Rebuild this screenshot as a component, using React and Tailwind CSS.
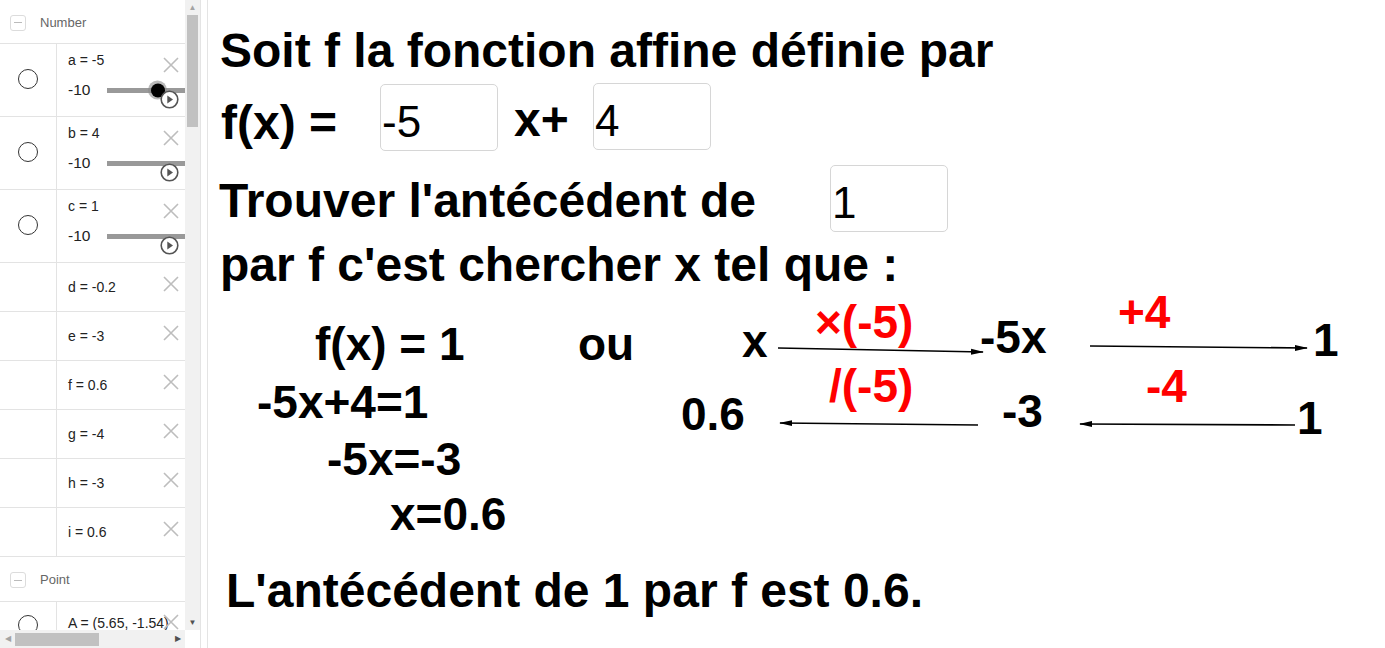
import React from "react";

const panelFont = "font-['Liberation_Sans',Arial,sans-serif]";
const T = "absolute whitespace-nowrap leading-none font-bold";

function Radio() {
  return <div className="h-[20px] w-[20px] rounded-full border border-[#333]" />;
}

function XIcon({ className }) {
  return (
    <svg className={className} width="18" height="18" viewBox="0 0 18 18">
      <path d="M2 2 L16 16 M16 2 L2 16" stroke="#bdbdbd" strokeWidth="1.6" fill="none" />
    </svg>
  );
}

function PlayButton() {
  return (
    <svg className="absolute left-[103px] top-[46px]" width="19" height="19" viewBox="0 0 19 19">
      <circle cx="9.5" cy="9.5" r="8.3" fill="#fff" stroke="#555" strokeWidth="1.6" />
      <path d="M7.3 5.6 L13 9.5 L7.3 13.4 Z" fill="#555" />
    </svg>
  );
}

function GroupHeader({ label, h }) {
  return (
    <div className={`flex items-center border-b border-[#e3e3e3] pl-[10px] pt-[2px] ${h}`}>
      <div className="flex h-[16px] w-[16px] items-center justify-center rounded-[3px] border border-[#dcdcdc]">
        <div className="h-px w-[8px] bg-[#bbb]" />
      </div>
      <span className="ml-[14px] text-[13px] text-[#666]">{label}</span>
    </div>
  );
}

function SliderRow({ label, knob }) {
  return (
    <div className="flex h-[73px] border-b border-[#e3e3e3]">
      <div className="flex w-[57px] shrink-0 justify-center border-r border-[#e3e3e3] pt-[25px]">
        <Radio />
      </div>
      <div className="relative flex-1 pl-[11px]">
        <div className="flex h-[32px] items-center text-[14px] text-[#222]">{label}</div>
        <div className="flex h-[28px] items-center">
          <span className="w-[39px] text-[15.5px] text-[#222]">-10</span>
          <div className="relative h-[5px] flex-1 bg-[#999]">
            {knob && (
              <div className="absolute left-[41px] top-1/2 flex h-[19px] w-[19px] -translate-y-1/2 items-center justify-center rounded-full bg-[#8a8a8a]/60">
                <div className="h-[14px] w-[14px] rounded-full bg-black" />
              </div>
            )}
          </div>
        </div>
        <XIcon className="absolute right-[5px] top-[12px]" />
        <PlayButton />
      </div>
    </div>
  );
}

function ValueRow({ label }) {
  return (
    <div className="flex h-[49px] border-b border-[#e3e3e3]">
      <div className="w-[57px] shrink-0 border-r border-[#e3e3e3]" />
      <div className="relative flex flex-1 items-center pl-[11px] text-[14px] text-[#222]">
        {label}
        <XIcon className="absolute right-[5px] top-[12px]" />
      </div>
    </div>
  );
}

function AlgebraPanel() {
  return (
    <div className={`flex h-full w-[200px] shrink-0 flex-col ${panelFont}`}>
      <div className="flex min-h-0 flex-1">
        <div className="w-[185px] overflow-hidden">
          <GroupHeader label="Number" h="h-[44px]" />
          <SliderRow label="a = -5" knob />
          <SliderRow label="b = 4" />
          <SliderRow label="c = 1" />
          <ValueRow label="d = -0.2" />
          <ValueRow label="e = -3" />
          <ValueRow label="f = 0.6" />
          <ValueRow label="g = -4" />
          <ValueRow label="h = -3" />
          <ValueRow label="i = 0.6" />
          <GroupHeader label="Point" h="h-[45px]" />
          <div className="flex h-[50px]">
            <div className="flex w-[57px] shrink-0 justify-center border-r border-[#e3e3e3] pt-[13px]">
              <Radio />
            </div>
            <div className="relative flex-1 whitespace-nowrap pl-[11px] pt-[11px] text-[14px] text-[#222]">
              A = (5.65, -1.54)
              <XIcon className="absolute right-[5px] top-[11px]" />
            </div>
          </div>
        </div>
        <div className="flex w-[15px] flex-col bg-[#f1f1f1]">
          <div className="flex h-[15px] items-center justify-center text-[8px] text-[#a3a3a3]">▲</div>
          <div className="mx-[2px] h-[112px] bg-[#c1c1c1]" />
          <div className="flex-1" />
          <div className="flex h-[15px] items-center justify-center text-[8px] text-[#505050]">▼</div>
        </div>
      </div>
      <div className="flex h-[18px]">
        <div className="flex w-[185px] items-center bg-[#f1f1f1]">
          <div className="flex w-[15px] items-center justify-center text-[8px] text-[#a3a3a3]">◀</div>
          <div className="h-[13px] w-[84px] bg-[#c1c1c1]" />
          <div className="flex-1" />
          <div className="flex w-[15px] items-center justify-center text-[8px] text-[#505050]">▶</div>
        </div>
        <div className="flex-1 bg-white" />
      </div>
    </div>
  );
}

function InputBox({ pos, value }) {
  return (
    <div
      className={`absolute h-[67px] w-[118px] rounded-[5px] border border-[#d6d6d6] bg-white pl-px pt-[15px] text-[44px] leading-none font-normal ${pos}`}
    >
      {value}
    </div>
  );
}

function Arrows() {
  return (
    <svg className="absolute left-0 top-0" width="1177" height="648">
      <defs>
        <marker id="ah" markerWidth="13" markerHeight="8" refX="12" refY="4" orient="auto" markerUnits="userSpaceOnUse">
          <path d="M0 1 L13 4 L0 7 Z" fill="#000" />
        </marker>
      </defs>
      <g stroke="#000" strokeWidth="1.6" markerEnd="url(#ah)">
        <line x1="570" y1="348" x2="775" y2="352" />
        <line x1="882" y1="346" x2="1099" y2="348" />
        <line x1="770" y1="425" x2="572" y2="423" />
        <line x1="1087" y1="425" x2="872" y2="424" />
      </g>
    </svg>
  );
}

function Graphics() {
  return (
    <div className="relative h-full flex-1 overflow-hidden bg-white font-['Liberation_Sans',Arial,sans-serif] text-black">
      <p className={`${T} left-[12px] top-[27px] text-[48px]`}>Soit f la fonction affine définie par</p>
      <p className={`${T} left-[13px] top-[99px] text-[48px]`}>f(x) =</p>
      <InputBox pos="left-[172px] top-[84px]" value="-5" />
      <p className={`${T} left-[306px] top-[96px] text-[48px]`}>x+</p>
      <InputBox pos="left-[385px] top-[83px]" value="4" />
      <p className={`${T} left-[11px] top-[177px] text-[48px]`}>Trouver l'antécédent de</p>
      <InputBox pos="left-[622px] top-[165px]" value="1" />
      <p className={`${T} left-[12px] top-[241px] text-[48px]`}>par f c'est chercher x tel que :</p>

      <p className={`${T} left-[107px] top-[321px] text-[46px]`}>f(x) = 1</p>
      <p className={`${T} left-[370px] top-[321px] text-[46px]`}>ou</p>
      <p className={`${T} left-[49px] top-[379px] text-[46px]`}>-5x+4=1</p>
      <p className={`${T} left-[119px] top-[436px] text-[46px]`}>-5x=-3</p>
      <p className={`${T} left-[182px] top-[491px] text-[46px]`}>x=0.6</p>

      <p className={`${T} left-[534px] top-[318px] text-[46px]`}>x</p>
      <p className={`${T} left-[607px] top-[299px] text-[46px] text-[#ff0000]`}>×(-5)</p>
      <p className={`${T} left-[772px] top-[314px] text-[46px]`}>-5x</p>
      <p className={`${T} left-[910px] top-[289px] text-[46px] text-[#ff0000]`}>+4</p>
      <p className={`${T} left-[1105px] top-[317px] text-[46px]`}>1</p>

      <p className={`${T} left-[473px] top-[391px] text-[46px]`}>0.6</p>
      <p className={`${T} left-[621px] top-[363px] text-[46px] text-[#ff0000]`}>/(-5)</p>
      <p className={`${T} left-[794px] top-[388px] text-[46px]`}>-3</p>
      <p className={`${T} left-[938px] top-[363px] text-[46px] text-[#ff0000]`}>-4</p>
      <p className={`${T} left-[1089px] top-[395px] text-[46px]`}>1</p>

      <Arrows />

      <p className={`${T} left-[18px] top-[567px] text-[48px]`}>L'antécédent de 1 par f est 0.6.</p>
    </div>
  );
}

export default function App() {
  return (
    <div className="flex h-[648px] w-[1385px] overflow-hidden bg-white">
      <AlgebraPanel />
      <div className="h-full w-[8px] shrink-0 border-x border-[#e4e4e4] bg-white" />
      <Graphics />
    </div>
  );
}
